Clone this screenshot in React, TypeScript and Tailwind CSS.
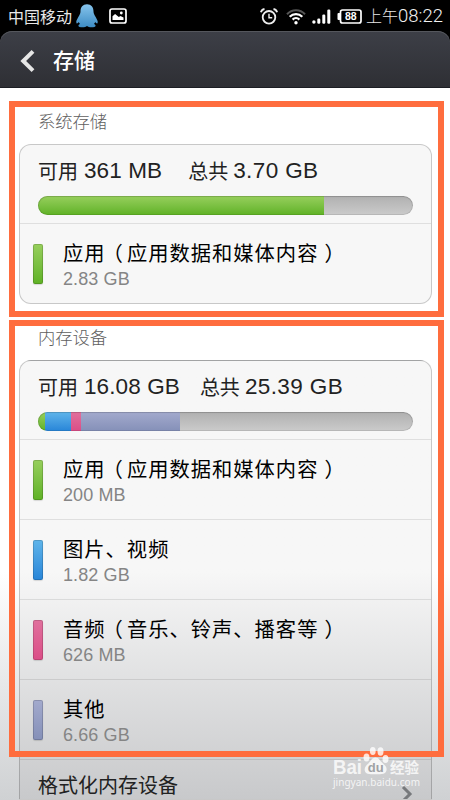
import React from 'react';

type Tone = 'green' | 'blue' | 'pink' | 'violet';

interface StorageItem {
  label: string;
  detail?: string;
  size: string;
  tone: Tone;
}

interface StorageCardProps {
  free: string;
  total: string;
  gap: string;
  segments: { tone: Tone; width: number }[];
  items: StorageItem[];
  className: string;
  children?: React.ReactNode;
}

const TONES: Record<Tone, string> = {
  green: 'from-[#97cf5c] to-[#5fb224]',
  blue: 'from-[#5fb5ea] to-[#2785d8]',
  pink: 'from-[#e0709d] to-[#db4d87]',
  violet: 'from-[#a3aacd] to-[#8590b8]',
};

const SYSTEM_ITEMS: StorageItem[] = [
  { label: '应用', detail: '应用数据和媒体内容', size: '2.83 GB', tone: 'green' },
];

const DEVICE_ITEMS: StorageItem[] = [
  { label: '应用', detail: '应用数据和媒体内容', size: '200 MB', tone: 'green' },
  { label: '图片、视频', size: '1.82 GB', tone: 'blue' },
  { label: '音频', detail: '音乐、铃声、播客等', size: '626 MB', tone: 'pink' },
  { label: '其他', size: '6.66 GB', tone: 'violet' },
];

const StatusBar: React.FC = () => (
  <div className="flex h-[31px] items-center bg-black pl-2 pr-[7px] text-base leading-none text-[#e8e8e8]">
    <span className="w-[68px] whitespace-nowrap">中国移动</span>
    <svg width="22" height="24" viewBox="0 0 22 24" className="shrink-0">
      <defs>
        <linearGradient id="penguin" x1="0" y1="0" x2="0" y2="1">
          <stop offset="0" stopColor="#86c4ec" />
          <stop offset="1" stopColor="#3d8cc4" />
        </linearGradient>
      </defs>
      <path
        d="M11 .3C6.800.3 4.500 3.400 4.500 7.400c0 2-1 3.400-2.300 5.800C.7 15.800-.3 18 .6 19.200c.4.600 1.500-.2 2.300-1.200.2 1 .7 1.500 1.200 2-1 .4-1.700 1-1.700 1.700 0 2 6.800 2.300 8.600.3 1.800 2 8.600 1.700 8.600-.3 0-.7-.7-1.300-1.700-1.700.5-.5 1-1 1.200-2 .8 1 1.900 1.800 2.300 1.200.9-1.200-.1-3.400-1.600-6-1.300-2.400-2.300-3.800-2.300-5.800C17.500 3.400 15.200.3 11 .3z"
        fill="url(#penguin)"
      />
    </svg>
    <svg width="18" height="16" viewBox="0 0 18 16" className="ml-[11px] shrink-0">
      <rect x="1" y="1" width="16" height="14" rx="2" fill="none" stroke="#fff" strokeWidth="1.700" />
      <path d="M3.500 12V8.300l2.600-2.200 3.700 3 1.700-1.200 3 1.600V12z" fill="#fff" />
      <circle cx="12.300" cy="5" r="1.400" fill="#fff" />
    </svg>

    <svg width="18" height="17" viewBox="0 0 18 17" fill="none" stroke="#eee" className="ml-auto mt-0.5 shrink-0">
      <circle cx="9" cy="9.300" r="6.300" strokeWidth="1.800" />
      <path d="M9 5.700v4h3.200" strokeWidth="1.400" />
      <path d="M.9 4.300C1.400 2.500 2.600 1.300 4.500 1M17.100 4.300c-.5-1.800-1.700-3-3.600-3.300" strokeWidth="1.900" />
    </svg>
    <svg width="20" height="17" viewBox="0 0 20 17" fill="none" className="ml-[8px] mt-0.5 shrink-0">
      <path d="M1 6.200c5-5.400 13-5.400 18 0" stroke="#555" strokeWidth="2" />
      <path d="M3.700 8.800c3.600-3.700 9-3.700 12.600 0" stroke="#fff" strokeWidth="2.200" />
      <path d="M6.600 11.600c2-2 4.800-2 6.800 0" stroke="#fff" strokeWidth="2.200" />
      <circle cx="10" cy="14.800" r="1.700" fill="#fff" />
    </svg>
    <svg width="19" height="15" viewBox="0 0 19 15" fill="#fff" className="ml-[6px] mt-0.5 shrink-0">
      <circle cx="1.900" cy="13" r="1.700" />
      <rect x="5.300" y="9.500" width="3" height="5.200" rx="1.200" />
      <rect x="10.300" y="5.500" width="3" height="9.200" rx="1.200" />
      <rect x="15.300" y=".5" width="3" height="14.200" rx="1.200" />
    </svg>
    <svg width="25" height="15" viewBox="0 0 25 15" className="ml-[6px] mt-0.5 shrink-0">
      <path d="M5.500 1H22q2 0 2 2v9q0 2-2 2H5.500q-2 0-2-2V3q0-2 2-2z" fill="none" stroke="#fff" strokeWidth="1.700" />
      <rect x=".5" y="4" width="3" height="7" rx="1" fill="#fff" />
      <text x="13.800" y="11.300" textAnchor="middle" fill="#fff" fontSize="10.500" fontWeight="700" fontFamily="Liberation Sans, sans-serif">
        88
      </text>
    </svg>
    <span className="ml-[4px] mt-0.5 flex items-center whitespace-nowrap font-['Roboto','Noto_Sans_CJK_SC',sans-serif] text-[18.500px] font-light">
      <span className="text-[16px]">上午</span>
      <span className="text-[#f2f2f2]">08:22</span>
    </span>
  </div>
);

const Header: React.FC = () => (
  <div className="bg-black">
    <header className="flex h-[57px] items-center rounded-t-xl bg-linear-to-b from-[#3d3f47] to-[#2e2f34] pl-5 shadow-[inset_0_1px_0_#55575d,inset_0_-1px_0_#1c1e24]">
      <svg width="16" height="24" viewBox="0 0 16 24" fill="none" className="mt-0.5">
        <path d="M13 2.300L3.200 12 13 21.700" stroke="#e6e6e6" strokeWidth="4" />
      </svg>
      <h1 className="ml-[17px] text-[21px] font-medium leading-none text-white">存储</h1>
    </header>
  </div>
);

const StorageRow: React.FC<{ item: StorageItem }> = ({ item }) => (
  <li className="flex h-20 border-t border-[#00000018] pl-[13px]">
    <span className={`mt-5 h-10 w-[10px] rounded-[2px] bg-linear-to-b shadow-[inset_0_0_0_1px_#00000026,0_1px_1px_#00000022] ${TONES[item.tone]}`} />
    <div className="ml-5 pt-[15px]">
      <p className="whitespace-nowrap text-[20.300px] leading-[26px] tracking-[1px] text-black">
        {item.label}
        {item.detail && (
          <>
            <span className="-ml-[3px] mr-[3px]">（</span>
            {item.detail}
            <span className="ml-[6px]">）</span>
          </>
        )}
      </p>
      <p className="mt-px font-['Liberation_Sans',sans-serif] text-[18px] leading-[26px] tracking-[0.1px] text-[#858585]">{item.size}</p>
    </div>
  </li>
);

const StorageCard: React.FC<StorageCardProps> = ({ free, total, gap, segments, items, className, children }) => (
  <section className={`mx-[19px] w-[413px] overflow-hidden border border-[#00000030] ${className}`}>
    <div className="h-[78px] px-[18px] pt-[13px]">
      <p className="flex h-[26px] items-center whitespace-nowrap text-xl text-[#222]">
        可用
        <span className="ml-[6px] font-['Liberation_Sans',sans-serif] text-[22.500px] tracking-[0.1px]">{free}</span>
        <span className={gap}>总共</span>
        <span className="ml-[5px] font-['Liberation_Sans',sans-serif] text-[22.500px] tracking-[0.4px]">{total}</span>
      </p>
      <div className="relative mt-3 flex h-[19px] w-[375px] overflow-hidden rounded-full bg-linear-to-b from-[#b0b0b0] to-[#cbcbcb]">
        {segments.map((s) => (
          <div key={s.tone} className={`bg-linear-to-b ${TONES[s.tone]}`} style={{ width: s.width }} />
        ))}
        <div className="absolute inset-0 rounded-full shadow-[inset_0_0_0_1px_#00000018,inset_0_1px_1px_#00000018]" />
      </div>
    </div>
    <ul>
      {items.map((item) => (
        <StorageRow key={item.size} item={item} />
      ))}
    </ul>
    {children}
  </section>
);

const Watermark: React.FC = () => (
  <svg width="92" height="46" viewBox="0 0 92 46" className="absolute left-[332px] top-[745px]" fill="#fff" fillOpacity="0.8">
    <text x="1" y="28.500" fontSize="20" fontWeight="700" textLength="29" lengthAdjust="spacingAndGlyphs" fontFamily="Liberation Sans, sans-serif">
      Bai
    </text>
    <ellipse cx="34.500" cy="12.500" rx="3" ry="4" />
    <ellipse cx="40.800" cy="6" rx="2.900" ry="4.100" />
    <ellipse cx="48.500" cy="6.500" rx="3" ry="4.200" />
    <ellipse cx="53.500" cy="14" rx="3" ry="4" />
    <path d="M43.500 12.500c3.500 0 4.500 3.500 7.200 5.700 2.600 2.200 4.400 4 3.800 7-.7 4-4 4-11 4s-10.200 0-10.800-4c-.4-3 1.500-4.700 3.700-6.700 2.300-2.200 3.300-6 7.100-6z" />
    <text x="43.800" y="26.800" textAnchor="middle" fontSize="13" fontWeight="700" fill="#a0a2a5" fillOpacity="1" fontFamily="Liberation Sans, sans-serif">
      du
    </text>
    <text x="58" y="27.500" fontSize="14.500" fontWeight="700" fontFamily="Noto Sans CJK SC, sans-serif">
      经验
    </text>
    <text x="1" y="40.500" fontSize="10" textLength="87" fontFamily="Noto Sans, sans-serif">
      jingyan.baidu.com
    </text>
  </svg>
);

const App: React.FC = () => (
  <div className="relative h-[800px] w-[450px] overflow-hidden bg-white font-['Noto_Sans_CJK_SC',sans-serif]">
    <StatusBar />
    <Header />
    <main className="h-[712px] overflow-hidden bg-linear-to-b from-white from-68% to-[#cfd1d3]">
      <h2 className="h-14 pl-[38px] pt-5 text-[17.300px] font-light leading-[26px] text-[#606060]">系统存储</h2>
      <StorageCard
        free="361 MB"
        total="3.70 GB"
        gap="ml-[26px]"
        segments={[{ tone: 'green', width: 286 }]}
        items={SYSTEM_ITEMS}
        className="rounded-xl bg-[#f7f7f7]"
      />
      <h2 className="h-14 pl-[38px] pt-5 text-[17.300px] font-light leading-[26px] text-[#606060]">内存设备</h2>
      <StorageCard
        free="16.08 GB"
        total="25.39 GB"
        gap="ml-5"
        segments={[
          { tone: 'green', width: 7 },
          { tone: 'blue', width: 26 },
          { tone: 'pink', width: 10 },
          { tone: 'violet', width: 99 },
        ]}
        items={DEVICE_ITEMS}
        className="h-[440px] rounded-t-xl bg-linear-to-b from-[#f7f7f7] from-48% to-[#c8c9cb]"
      >
        <div className="flex h-10 justify-between border-t border-[#00000018] px-[18px]">
          <span className="mt-3 text-xl leading-[26px] text-[#222]">格式化内存设备</span>
          <svg width="12" height="18" viewBox="0 0 12 18" fill="none" className="mt-[25px]">
            <path d="M2 2l7 7-7 7" stroke="#77797c" strokeWidth="3" />
          </svg>
        </div>
      </StorageCard>
    </main>

    {/* Highlight frames drawn over the two storage groups */}
    <div className="absolute left-[9px] top-[101px] h-[216px] w-[435px] border-6 border-[#ff6d3e]" />
    <div className="absolute left-[9px] top-[320px] h-[437px] w-[435px] border-6 border-[#ff6d3e]" />
    <Watermark />
  </div>
);

export default App;
